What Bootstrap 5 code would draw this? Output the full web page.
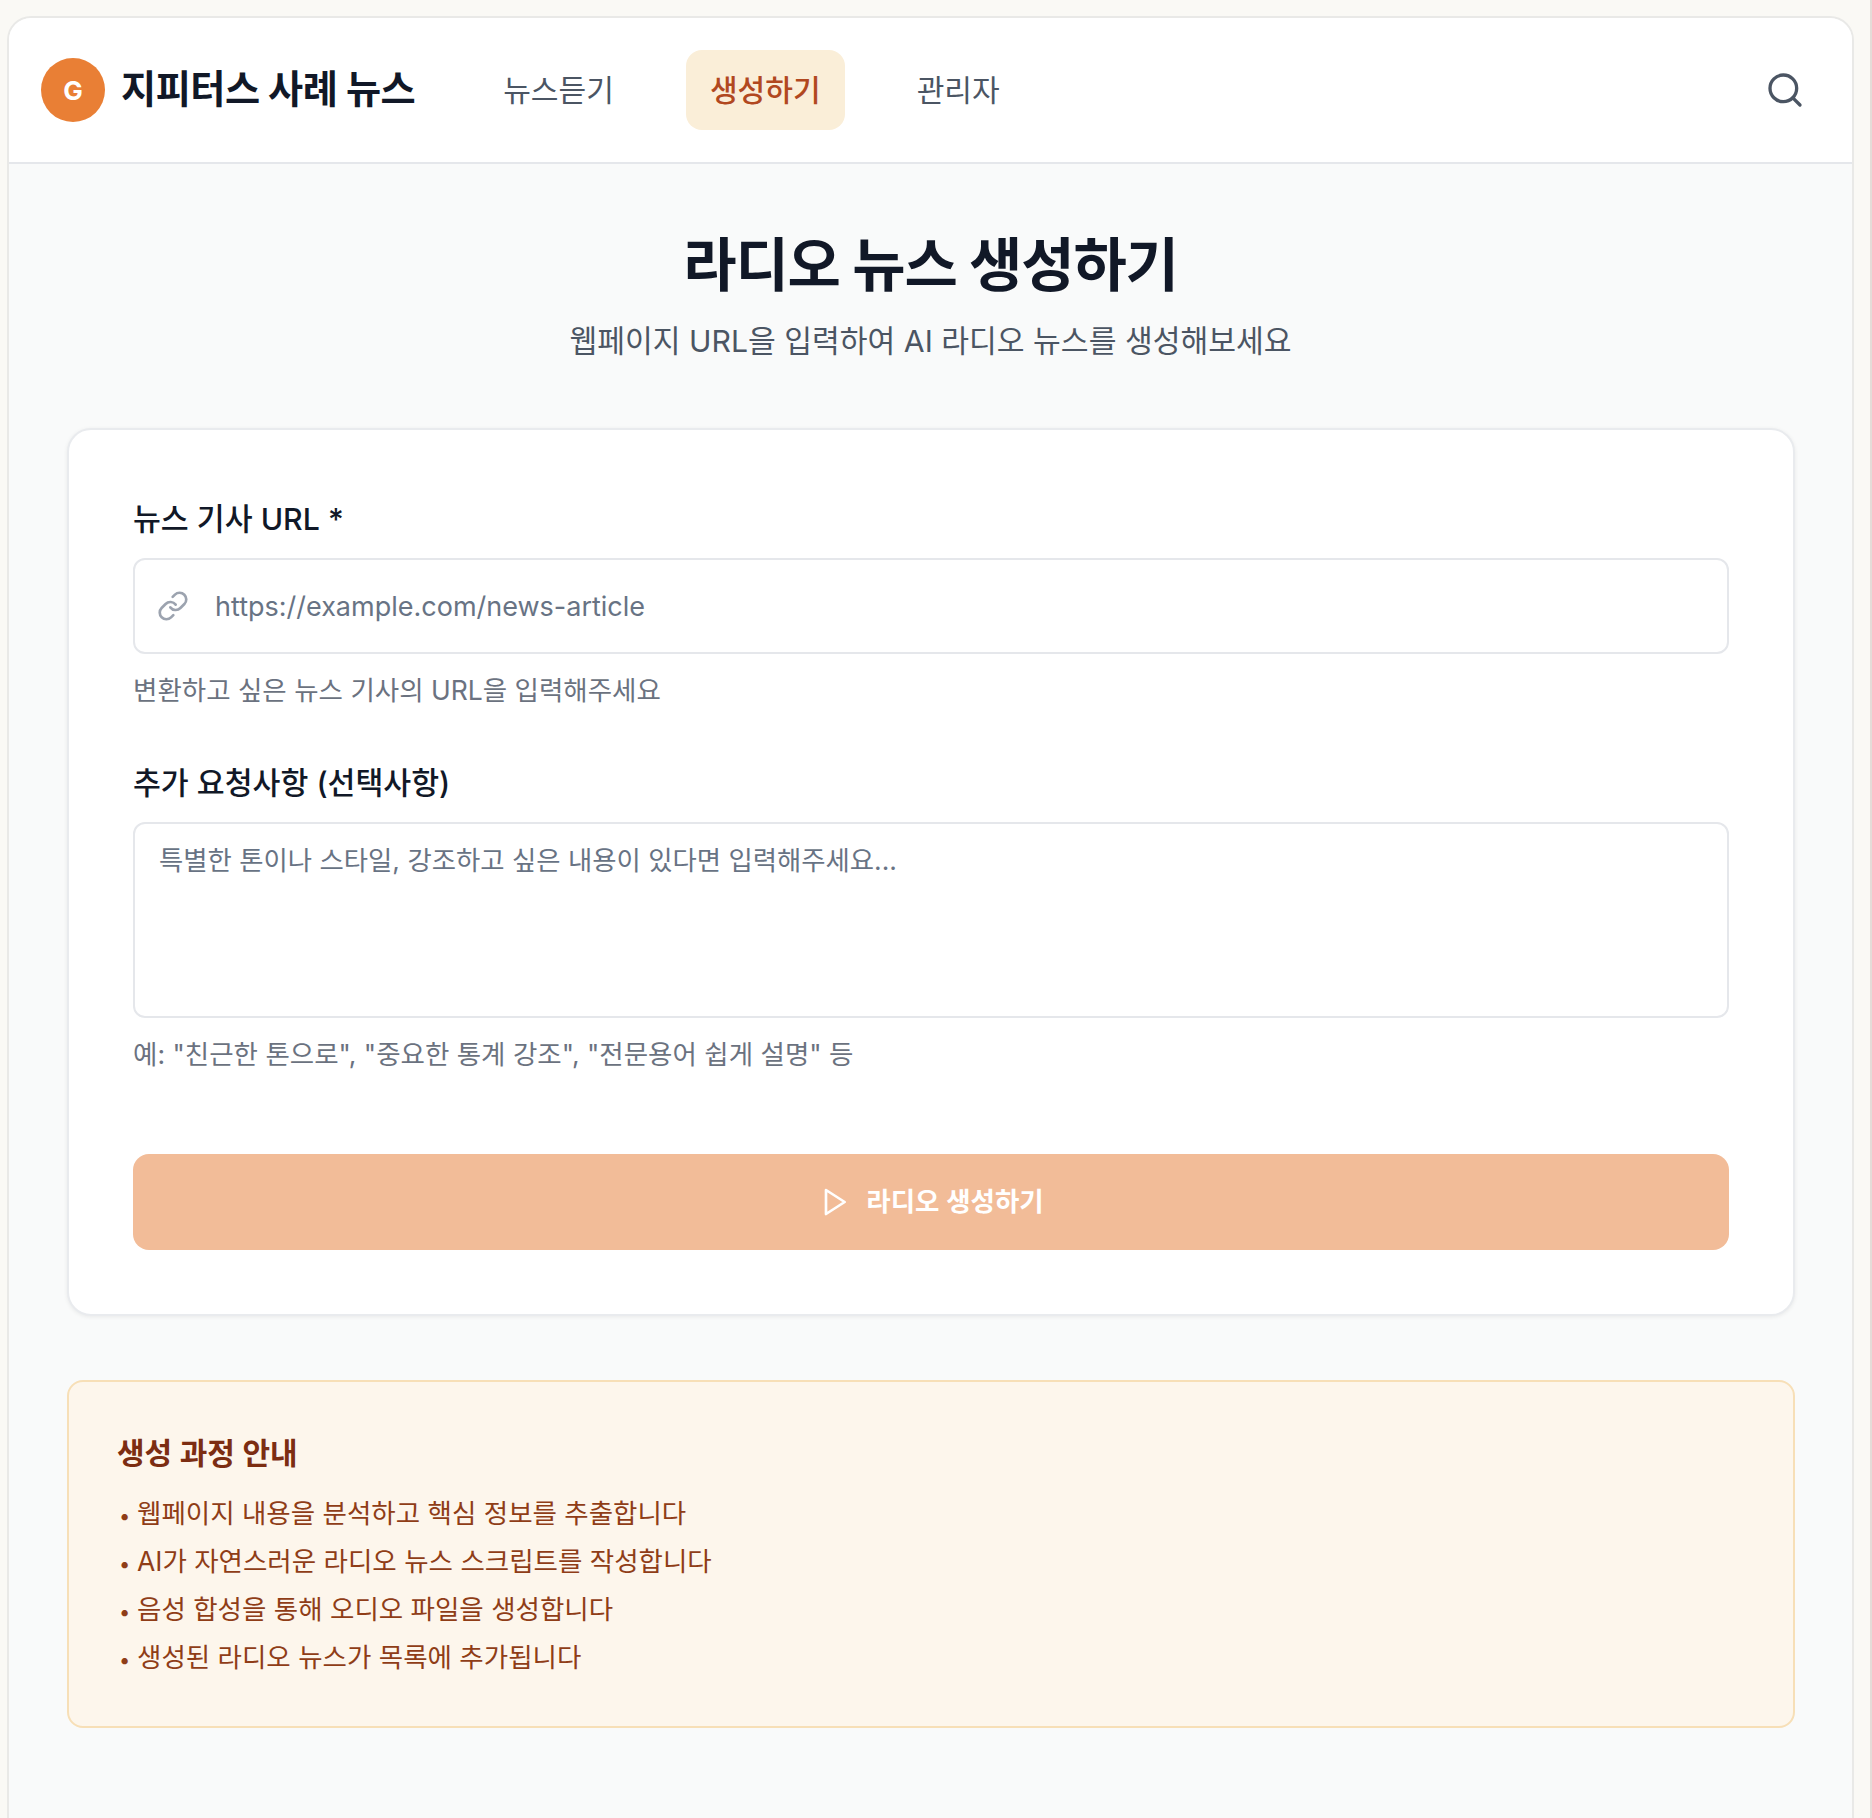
<!DOCTYPE html>
<html lang="ko">
<head>
  <meta charset="UTF-8">
  <meta name="viewport" content="width=device-width, initial-scale=1.0">
  <title>라디오 뉴스 생성하기</title>
  <link href="https://cdn.jsdelivr.net/npm/bootstrap@5.3.3/dist/css/bootstrap.min.css" rel="stylesheet">
  <style>
    body {
      font-family: Inter, "Noto Sans CJK KR", sans-serif;
      background: #faf9f5;
      padding: 16px 16px 0 7px;
      height: 1818px;
      overflow: hidden;
      border-right: 2px solid #e4dcd8;
    }
    .app-frame {
      height: 1802px;
      background: #f9fafa;
      border: 2px solid #e9e9e7;
      border-bottom: 0;
      border-radius: 24px 24px 0 0;
    }
    .top-bar {
      height: 146px;
      background: #fff;
      border-bottom: 2px solid #e5e7eb;
      border-radius: 22px 22px 0 0;
      padding: 0 47px 0 32px;
    }
    .logo-dot {
      width: 64px;
      height: 64px;
      background: #e97f35;
      font-size: 26px;
      font-weight: 700;
    }
    .brand-name {
      margin-left: 16px;
      margin-right: 64px;
      font-size: 38.2px;
      font-weight: 700;
      color: #111827;
      letter-spacing: -0.5px;
    }
    .menu-link {
      display: block;
      padding: 0 24px;
      line-height: 80px;
      font-size: 30.1px;
      color: #4b5563;
      border-radius: 16px;
      text-decoration: none;
      margin-right: 48px;
    }
    .menu-link.is-current {
      background: #faeed8;
      color: #b1481f;
      font-weight: 500;
    }
    .page-title {
      margin: 61px 0 0;
      font-size: 58px;
      font-weight: 700;
      line-height: 80px;
      letter-spacing: -1.2px;
      color: #111827;
    }
    .page-sub {
      margin: 16px 0 0;
      font-size: 30.2px;
      line-height: 40px;
      color: #4b5563;
    }
    .form-box {
      margin: 67px 57px 0 58px;
      padding: 69px 64px 64px;
      background: #fff;
      border: 2px solid #e9ebee;
      border-radius: 24px;
      box-shadow: 0 1px 4px rgba(0, 0, 0, .07);
    }
    .field-label {
      display: block;
      margin-bottom: 19px;
      font-size: 30.3px;
      line-height: 40px;
      font-weight: 500;
      color: #111827;
    }
    .field-label.is-second { margin-top: 55px; }
    .url-wrap { position: relative; }
    .url-icon {
      position: absolute;
      left: 24px;
      top: 32px;
      width: 32px;
      height: 32px;
      color: #9ca3af;
    }
    .field-input {
      height: 96px;
      padding: 0 24px 0 80px;
      font-size: 27px;
      border: 2px solid #e5e7eb;
      border-radius: 12px;
    }
    .field-area {
      height: 196px;
      padding: 16px 24px;
      font-size: 26.4px;
      line-height: 40px;
      border: 2px solid #e5e7eb;
      border-radius: 12px;
      resize: none;
    }
    .field-input::placeholder, .field-area::placeholder { color: #687384; opacity: 1; }
    .field-hint {
      margin: 18px 0 0;
      font-size: 26.5px;
      line-height: 36px;
      color: #6b7280;
    }
    .go-btn {
      height: 96px;
      margin-top: 82px;
      font-size: 26.5px;
      font-weight: 600;
      color: #fff;
      background: #f2bc98;
      border: 0;
      border-radius: 16px;
    }
    .go-btn:disabled { color: #fff; background: #f2bc98; opacity: 1; }
    .info-box {
      margin: 64px 57px 0 58px;
      padding: 51px 48px 0;
      height: 348px;
      background: #fdf6ec;
      border: 2px solid #f7dfb7;
      border-radius: 16px;
    }
    .info-title {
      margin: 0 0 16px;
      font-size: 30px;
      line-height: 40px;
      font-weight: 600;
      color: #7c2d12;
    }
    .info-list {
      list-style: none;
      margin: 0;
      padding: 0;
      font-size: 26.5px;
      line-height: 48px;
      color: #8f3d17;
    }
    .info-list li::before {
      content: "•";
      display: inline-block;
      width: 20px;
      padding-left: 2px;
      font-size: 20px;
      line-height: 1;
    }
  </style>
</head>
<body>
  <div class="app-frame">

    <!-- header -->
    <header class="top-bar d-flex align-items-center">
      <span class="logo-dot rounded-circle d-flex align-items-center justify-content-center text-white">G</span>
      <span class="brand-name">지피터스 사례 뉴스</span>
      <nav class="d-flex">
        <a class="menu-link" href="#">뉴스듣기</a>
        <a class="menu-link is-current" href="#">생성하기</a>
        <a class="menu-link" href="#">관리자</a>
      </nav>
      <svg class="ms-auto" width="40" height="40" viewBox="0 0 24 24" fill="none" stroke="#4b5563" stroke-width="2" stroke-linecap="round" stroke-linejoin="round">
        <circle cx="11" cy="11" r="8"></circle>
        <path d="m21 21-4.3-4.3"></path>
      </svg>
    </header>

    <main>
      <div class="text-center">
        <h1 class="page-title">라디오 뉴스 생성하기</h1>
        <p class="page-sub">웹페이지 URL을 입력하여 AI 라디오 뉴스를 생성해보세요</p>
      </div>

      <form class="form-box">
        <label class="field-label" for="url">뉴스 기사 URL *</label>
        <div class="url-wrap">
          <svg class="url-icon" viewBox="0 0 24 24" fill="none" stroke="currentColor" stroke-width="2" stroke-linecap="round" stroke-linejoin="round">
            <path d="M10 13a5 5 0 0 0 7.54.54l3-3a5 5 0 0 0-7.07-7.07l-1.72 1.71"></path>
            <path d="M14 11a5 5 0 0 0-7.54-.54l-3 3a5 5 0 0 0 7.07 7.07l1.71-1.71"></path>
          </svg>
          <input id="url" class="form-control field-input" type="url" placeholder="https://example.com/news-article">
        </div>
        <p class="field-hint">변환하고 싶은 뉴스 기사의 URL을 입력해주세요</p>

        <label class="field-label is-second" for="extra">추가 요청사항 (선택사항)</label>
        <textarea id="extra" class="form-control field-area" placeholder="특별한 톤이나 스타일, 강조하고 싶은 내용이 있다면 입력해주세요..."></textarea>
        <p class="field-hint">예: "친근한 톤으로", "중요한 통계 강조", "전문용어 쉽게 설명" 등</p>

        <button class="btn go-btn w-100 d-flex align-items-center justify-content-center gap-3" type="button" disabled>
          <svg width="32" height="32" viewBox="0 0 24 24" fill="none" stroke="currentColor" stroke-width="2" stroke-linecap="round" stroke-linejoin="round">
            <polygon points="6 3 20 12 6 21 6 3"></polygon>
          </svg>
          라디오 생성하기
        </button>
      </form>

      <section class="info-box">
        <h3 class="info-title">생성 과정 안내</h3>
        <ul class="info-list">
          <li>웹페이지 내용을 분석하고 핵심 정보를 추출합니다</li>
          <li>AI가 자연스러운 라디오 뉴스 스크립트를 작성합니다</li>
          <li>음성 합성을 통해 오디오 파일을 생성합니다</li>
          <li>생성된 라디오 뉴스가 목록에 추가됩니다</li>
        </ul>
      </section>
    </main>
  </div>

  <script src="https://cdn.jsdelivr.net/npm/bootstrap@5.3.3/dist/js/bootstrap.bundle.min.js"></script>
</body>
</html>
